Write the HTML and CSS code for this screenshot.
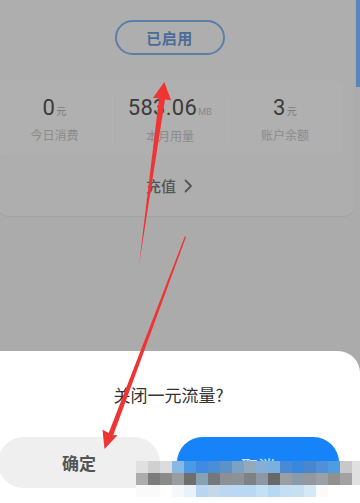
FILE: index.html
```html
<!DOCTYPE html>
<html lang="zh-CN">
<head>
<meta charset="utf-8">
<title>一元流量</title>
<link rel="stylesheet" href="styles.css">
</head>
<body>
<div class="page">
  <div class="top">
    <div class="card">
      <div class="status-wrap"><span class="status-btn">已启用</span></div>
      <div class="stats">
        <div class="stat">
          <div class="num">0<span class="unit">元</span></div>
          <div class="label">今日消费</div>
        </div>
        <div class="stat">
          <div class="num">583.06<span class="unit mb">MB</span></div>
          <div class="label">本月用量</div>
        </div>
        <div class="stat">
          <div class="num">3<span class="unit">元</span></div>
          <div class="label">账户余额</div>
        </div>
      </div>
      <div class="recharge">
        <span>充值</span>
        <svg class="chev" width="9" height="14" viewBox="0 0 9 14"><path d="M1.5 1.5 L7 7 L1.5 12.5" fill="none" stroke="#555" stroke-width="1.8" stroke-linecap="round" stroke-linejoin="round"/></svg>
      </div>
    </div>
    <div class="strip"></div>
  </div>

  <div class="sheet">
    <div class="title">关闭一元流量?</div>
    <div class="actions">
      <div class="btn btn-ok">确定</div>
      <div class="btn btn-cancel">取消</div>
    </div>
  </div>

  <div class="mosaic">
    <i style="background:#e0e0e0"></i><i style="background:#d0d0d0"></i><i style="background:#dcdcdc"></i><i style="background:#88b8e4"></i><i style="background:#4c9ae6"></i><i style="background:#3d8ce2"></i><i style="background:#4a8ed8"></i><i style="background:#5c92c8"></i><i style="background:#7aa2c4"></i><i style="background:#93a9bc"></i><i style="background:#86aed6"></i><i style="background:#7ab0e0"></i><i style="background:#4a8ad4"></i><i style="background:#3a88dc"></i><i style="background:#4a86d0"></i><i style="background:#5090d8"></i><i style="background:#509ce2"></i><i style="background:#c8c8c8"></i><i style="background:#e0e0e0"></i>
    <i style="background:#acacac"></i><i style="background:#7c7c7c"></i><i style="background:#8a8a8a"></i><i style="background:#9a9c9e"></i><i style="background:#6e6e6e"></i><i style="background:#86a0b4"></i><i style="background:#74787c"></i><i style="background:#8c9094"></i><i style="background:#8e9296"></i><i style="background:#7e8286"></i><i style="background:#8e98a4"></i><i style="background:#686868"></i><i style="background:#9a9ea2"></i><i style="background:#8a9aa8"></i><i style="background:#9298a0"></i><i style="background:#9aa0a6"></i><i style="background:#909090"></i><i style="background:#a2a2a2"></i><i style="background:#e0e0e0"></i>
    <i style="background:#fafafa"></i><i style="background:#fafafa"></i><i style="background:#ffffff"></i><i style="background:#f4f8fb"></i><i style="background:#e8f2fa"></i><i style="background:#b8d6f0"></i><i style="background:#c4d8ea"></i><i style="background:#bcd8f0"></i><i style="background:#b8d8f4"></i><i style="background:#b8d8f4"></i><i style="background:#c4e0f4"></i><i style="background:#b8d8f2"></i><i style="background:#c4def4"></i><i style="background:#c6e0f2"></i><i style="background:#d6e8f6"></i><i style="background:#fafafa"></i><i style="background:#ffffff"></i><i style="background:#ffffff"></i><i style="background:#ffffff"></i>
  </div>

  <svg class="arrows" width="360" height="503" viewBox="0 0 360 503">
    <polygon points="139,265 159,98.6 153,97.8 164.3,82 171,100.2 165,99.4" fill="#ef3434"/>
    <polygon points="185,236 186,237 113.3,434.9 117.5,435.3 104.5,449 102.5,429.7 108.7,433.1" fill="#ef3434"/>
  </svg>
</div>
</body>
</html>
```
FILE: styles.css
```css
* { box-sizing: border-box; }

html, body {
  margin: 0;
  padding: 0;
}

body {
  width: 360px;
  height: 503px;
  overflow: hidden;
  background: #ababab;
  font-family: "Noto Sans CJK SC", "Noto Sans", sans-serif;
}

.page {
  position: relative;
  width: 360px;
  height: 503px;
  display: flex;
  flex-direction: column;
}

.top {
  display: flex;
  align-items: flex-start;
}

.card {
  width: 358px;
  margin-left: -3px;
  margin-top: -12px;
  padding: 32px 13px 0 0;
  background: #aeaeae;
  border-radius: 12px;
  box-shadow: 0 1px 1px rgba(0,0,0,0.04);
}

.strip {
  width: 4px;
  height: 87px;
  margin-left: 1px;
  background: #5b86bd;
}

.status-wrap {
  display: flex;
  justify-content: center;
}

.status-btn {
  width: 110px;
  height: 35px;
  border: 2px solid #5d7fa7;
  border-radius: 18px;
  display: flex;
  align-items: center;
  justify-content: center;
  color: #4a6c9a;
  font-size: 15px;
  font-weight: 700;
  letter-spacing: 0.5px;
}

.stats {
  margin-top: 25px;
  display: grid;
  grid-template-columns: repeat(3, 1fr);
  padding: 15px 0 11px;
  background: #b0b0b0;
  border-radius: 8px;
}

.stat {
  display: flex;
  flex-direction: column;
  align-items: center;
}

.stat + .stat {
  border-left: 1px solid #b4b4b4;
}

.num {
  font-family: Roboto, "Noto Sans", sans-serif;
  font-size: 22px;
  line-height: 26px;
  color: #3b3b3b;
  letter-spacing: 0.3px;
}

.unit {
  font-family: "Noto Sans CJK SC", sans-serif;
  font-size: 10px;
  color: #7a7a7a;
  margin-left: 1px;
}

.unit.mb {
  font-family: Roboto, sans-serif;
  font-size: 9px;
  color: #888;
}

.label {
  margin-top: 2px;
  font-size: 12px;
  line-height: 17px;
  color: #8b8b8b;
}

.recharge {
  height: 61px;
  display: flex;
  align-items: center;
  justify-content: center;
  gap: 8px;
  font-size: 15px;
  color: #555;
  font-weight: 500;
}

.chev {
  display: block;
  margin-top: 1px;
}

.sheet {
  margin-top: auto;
  height: 152px;
  background: #fff;
  border-top-right-radius: 22px;
  padding-top: 32px;
}

.title {
  width: 341px;
  margin-left: -2px;
  text-align: center;
  font-size: 17px;
  line-height: 24px;
  color: #333;
}

.actions {
  margin-top: 30px;
  margin-left: -2px;
  width: 341px;
  display: flex;
  gap: 17px;
}

.btn {
  flex: 1;
  height: 51px;
  border-radius: 26px;
  display: flex;
  align-items: center;
  justify-content: center;
  font-size: 17px;
  font-weight: 700;
}

.btn-ok {
  background: #efefef;
  color: #555;
}

.btn-cancel {
  background: #1683f9;
  color: rgba(255,255,255,0.8);
  font-weight: 400;
  padding-top: 6px;
}

.mosaic {
  position: absolute;
  left: 136px;
  top: 461px;
  display: grid;
  grid-template-columns: repeat(19, 12px);
  grid-auto-rows: 12px;
}

.mosaic i {
  display: block;
}

.arrows {
  position: absolute;
  left: 0;
  top: 0;
  pointer-events: none;
}
```
